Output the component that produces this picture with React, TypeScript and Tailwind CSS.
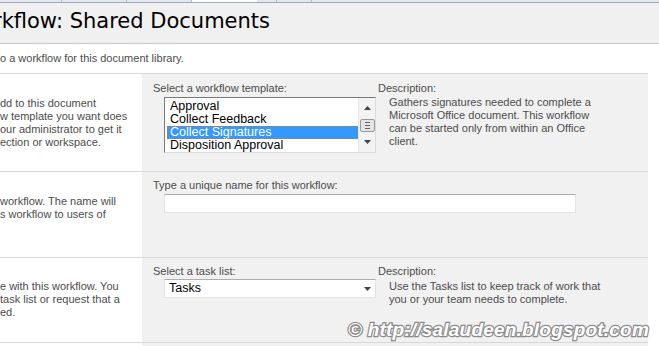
import React from 'react'

const body = "font-['Liberation_Sans',Arial,sans-serif] text-[11px] leading-[13px] text-[#4c4c4c]"

function Line({ children }: { children: React.ReactNode }) {
    return <div className="whitespace-nowrap">{children}</div>
}

function ScrollArrow({ up }: { up?: boolean }) {
    return (
        <svg width="7" height="4" viewBox="0 0 7 4" className="block">
            {up ? <path d="M0 4 L3.5 0 L7 4 Z" fill="#444" /> : <path d="M0 0 L3.5 4 L7 0 Z" fill="#444" />}
        </svg>
    )
}

function TemplateList() {
    const items = ['Approval', 'Collect Feedback', 'Collect Signatures', 'Disposition Approval']
    return (
        <div className="ml-[22px] mt-[2px] flex h-[56px] w-[212px] border border-[#7a7a7a] border-r-[#dcdcdc] border-b-[#dcdcdc] bg-white">
            <div className="flex-1 pt-[2px] pl-[2px] font-['Liberation_Sans',Arial,sans-serif] text-[12.5px] leading-[13px] text-black">
                {items.map((i) => (
                    <div
                        key={i}
                        className={
                            i === 'Collect Signatures'
                                ? 'h-[13px] pl-[3px] bg-[#3399ff] text-white outline-1 outline-dotted outline-[#c8772c] -outline-offset-1'
                                : 'h-[13px] pl-[3px]'
                        }
                    >
                        {i}
                    </div>
                ))}
            </div>
            <div className="flex w-[17px] flex-col items-center justify-between border-l border-[#e6e6e6] bg-[#f3f3f3] py-[8px]">
                <ScrollArrow up />
                <div className="flex h-[13px] w-[15px] flex-col justify-center gap-[2px] rounded-[2px] border border-[#9a9a9a] bg-[#e4e4e4] px-[4px]">
                    <div className="h-px bg-[#666]" />
                    <div className="h-px bg-[#666]" />
                    <div className="h-px bg-[#666]" />
                </div>
                <ScrollArrow />
            </div>
        </div>
    )
}

export default function App() {
    return (
        <div className="relative h-[346px] w-[659px] overflow-hidden bg-white">
            {/* top tab strip */}
            <div className="flex h-[3px] border-b border-[#9aa8c0] bg-[#e4e8ee]">
                <div className="w-[62px] border-r border-[#b8c0cc]" />
                <div className="w-[65px] border-r border-[#b8c0cc]" />
                <div className="w-[65px] border-r border-[#b8c0cc]" />
                <div className="w-[65px] bg-white" />
                <div className="w-[20px] border-r border-[#b8c0cc]" />
                <div className="w-[35px] border-r border-[#b8c0cc]" />
                <div className="flex-1" />
            </div>

            {/* title */}
            <div className="h-[41px] border-b border-[#c6c6c6] bg-[#f0f0f0] pt-[6px]">
                <div className="-ml-[7px] whitespace-nowrap font-['DejaVu_Sans',Verdana,sans-serif] text-[21px] leading-[24px] text-black">
                    rkflow: Shared Documents
                </div>
            </div>

            <div className="w-[648px]">
                <div className={`h-[30px] border-b border-[#d8d8d8] pt-[8px] ${body}`}>
                    <Line>o a workflow for this document library.</Line>
                </div>

                {/* workflow template */}
                <div className="grid h-[98px] grid-cols-[142px_1fr] border-b border-[#d8d8d8]">
                    <div className={`pt-[23px] ${body}`}>
                        <Line>dd to this document</Line>
                        <Line>w template you want does</Line>
                        <Line>our administrator to get it</Line>
                        <Line>ection or workspace.</Line>
                    </div>
                    <div className="flex bg-[#f1f1f1] pt-[8px]">
                        <div className="w-[236px]">
                            <div className={`pl-[11px] ${body}`}>Select a workflow template:</div>
                            <TemplateList />
                        </div>
                        <div className={body}>
                            <Line>Description:</Line>
                            <div className="pt-px pl-[11px]">
                                <Line>Gathers signatures needed to complete a</Line>
                                <Line>Microsoft Office document. This workflow</Line>
                                <Line>can be started only from within an Office</Line>
                                <Line>client.</Line>
                            </div>
                        </div>
                    </div>
                </div>

                {/* name */}
                <div className="grid h-[86px] grid-cols-[142px_1fr] border-b border-[#d8d8d8]">
                    <div className={`pt-[23px] ${body}`}>
                        <Line>workflow. The name will</Line>
                        <Line>s workflow to users of</Line>
                    </div>
                    <div className="bg-[#f1f1f1] pt-[7px]">
                        <div className={`pl-[11px] ${body}`}>Type a unique name for this workflow:</div>
                        <div className="ml-[22px] mt-[2px] h-[19px] w-[412px] border border-[#e3e3e3] border-t-[#abadb3] bg-white" />
                    </div>
                </div>

                {/* task list */}
                <div className="grid h-[85px] grid-cols-[142px_1fr] border-b border-[#d8d8d8]">
                    <div className={`pt-[22px] ${body}`}>
                        <Line>e with this workflow. You</Line>
                        <Line>task list or request that a</Line>
                        <Line>ed.</Line>
                    </div>
                    <div className="flex bg-[#f1f1f1] pt-[7px]">
                        <div className="w-[236px]">
                            <div className={`pl-[11px] ${body}`}>Select a task list:</div>
                            <div className="ml-[22px] mt-[1px] flex h-[19px] w-[212px] items-center justify-between border border-[#e3e3e3] border-t-[#abadb3] bg-white pl-[4px] pr-[4px] font-['Liberation_Sans',Arial,sans-serif] text-[12.5px] text-black">
                                <span>Tasks</span>
                                <ScrollArrow />
                            </div>
                        </div>
                        <div className={body}>
                            <Line>Description:</Line>
                            <div className="pt-[2px] pl-[11px]">
                                <Line>Use the Tasks list to keep track of work that</Line>
                                <Line>you or your team needs to complete.</Line>
                            </div>
                        </div>
                    </div>
                </div>

                <div className="grid h-[10px] grid-cols-[142px_1fr]">
                    <div />
                    <div className="bg-[#f1f1f1]" />
                </div>
            </div>

            {/* watermark */}
            <div className="absolute left-[348px] top-[319px] whitespace-nowrap font-['Liberation_Sans',Arial,sans-serif] text-[19px] font-bold italic leading-[22px] tracking-[0.2px] text-white [-webkit-text-stroke:2.4px_#8a8a8a] [paint-order:stroke_fill]">
                © http://salaudeen.blogspot.com
            </div>
        </div>
    )
}
